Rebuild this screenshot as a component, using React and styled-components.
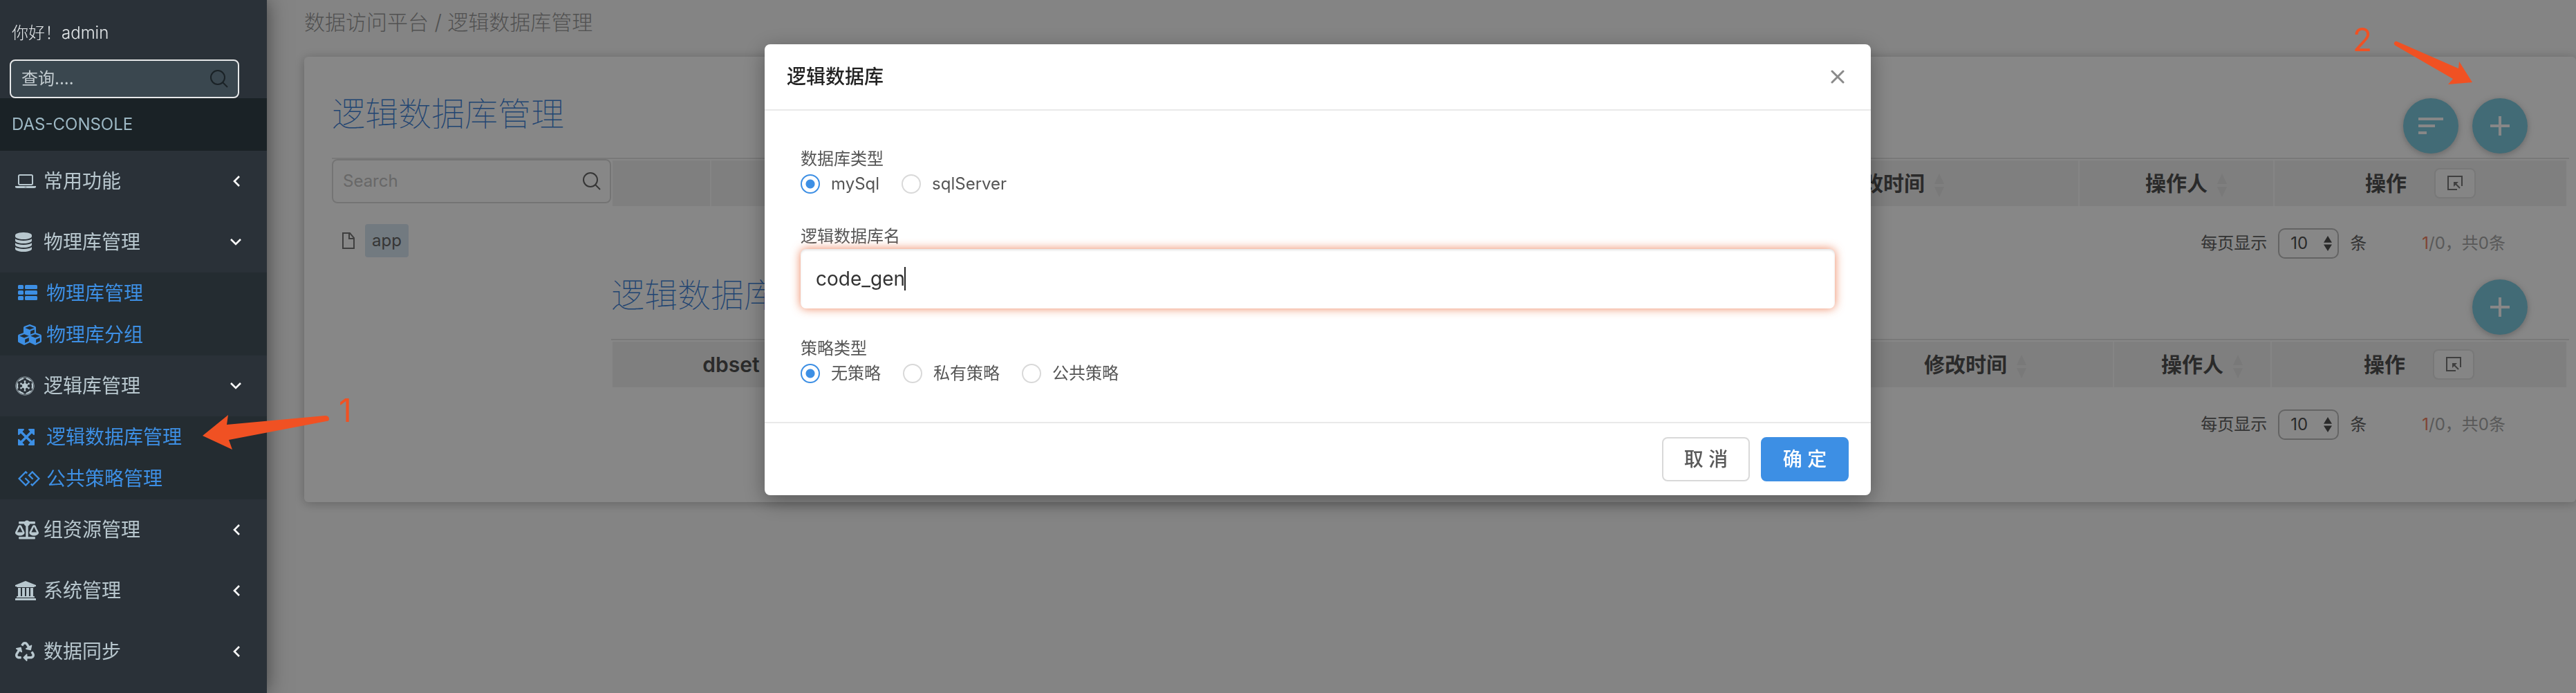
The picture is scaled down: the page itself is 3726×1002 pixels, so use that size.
import React, { useState } from 'react';
import styled, { createGlobalStyle, css } from 'styled-components';
import { FaCubes, FaEmpire, FaGg, FaBalanceScale, FaRecycle } from 'react-icons/fa';

const GlobalStyle = createGlobalStyle`
  *, *::before, *::after { box-sizing: border-box; }
  body {
    margin: 0;
    background: #fafafa;
    font-family: Inter, "Noto Sans CJK SC", sans-serif;
    font-size: 24px;
    line-height: 36px;
    color: #555;
  }
  button, input, select { font: inherit; color: inherit; margin: 0; }
  h1, h2, p, ul { margin: 0; padding: 0; font-weight: inherit; }
  ul { list-style: none; }
  a { text-decoration: none; color: inherit; }
`;

/* ---------- icons ---------- */

const Glyph = ({ box, w, h, children }) => (
  <svg viewBox={box} width={w} height={h} fill="currentColor" aria-hidden="true">{children}</svg>
);
const LaptopIcon = () => (
  <Glyph box="0 0 1920 1792" w={30} h={28}>
    <path d="M416 1280q-66 0-113-47t-47-113v-704q0-66 47-113t113-47h1088q66 0 113 47t47 113v704q0 66-47 113t-113 47h-1088zm-32-864v704q0 13 9.500 22.500t22.500 9.500h1088q13 0 22.500-9.500t9.500-22.500v-704q0-13-9.500-22.500t-22.500-9.500h-1088q-13 0-22.500 9.500t-9.500 22.500zm1376 928h160v96q0 40-47 68t-113 28h-1600q-66 0-113-28t-47-68v-96h1760zm-720 96q16 0 16-16t-16-16h-160q-16 0-16 16t16 16h160z" />
  </Glyph>
);
const DatabaseIcon = () => (
  <Glyph box="128 0 1536 1792" w={24} h={28}>
    <path d="M896 768q237 0 443-43t325-127v170q0 69-103 128t-280 93.500-385 34.500-385-34.500-280-93.500-103-128v-170q119 84 325 127t443 43zm0 768q237 0 443-43t325-127v170q0 69-103 128t-280 93.500-385 34.500-385-34.500-280-93.500-103-128v-170q119 84 325 127t443 43zm0-384q237 0 443-43t325-127v170q0 69-103 128t-280 93.500-385 34.500-385-34.500-280-93.500-103-128v-170q119 84 325 127t443 43zm0-1152q208 0 385 34.500t280 93.500 103 128v128q0 69-103 128t-280 93.500-385 34.500-385-34.500-280-93.500-103-128v-128q0-69 103-128t280-93.500 385-34.500z" />
  </Glyph>
);
const ListIcon = () => (
  <Glyph box="0 0 1792 1536" w={28} h={24}>
    {[0, 512, 1024].map((y) => (
      <g key={y}>
        <rect x="0" y={y} width="512" height="384" rx="96" />
        <rect x="640" y={y} width="1152" height="384" rx="96" />
      </g>
    ))}
  </Glyph>
);
const ArrowsIcon = () => (
  <Glyph box="0 0 1536 1536" w={24} h={24}>
    <path d="M1283 413l-355 355 355 355 144-144q29-31 70-14 39 17 39 59v448q0 26-19 45t-45 19h-448q-42 0-59-40-17-39 14-69l144-144-355-355-355 355 144 144q31 30 14 69-17 40-59 40h-448q-26 0-45-19t-19-45v-448q0-42 40-59 39-17 69 14l144 144 355-355-355-355-144 144q-19 19-45 19-12 0-24-5-40-17-40-59v-448q0-26 19-45t45-19h448q42 0 59 40 17 39-14 69l-144 144 355 355 355-355-144-144q-31-30-14-69 17-40 59-40h448q26 0 45 19t19 45v448q0 42-39 59-13 5-25 5-26 0-45-19z" />
  </Glyph>
);
const BankIcon = () => (
  <Glyph box="0 0 1920 1792" w={30} h={28}>
    <path d="M960 0l960 384v128h-128q0 26-20.500 45t-48.500 19h-1526q-28 0-48.500-19t-20.500-45h-128v-128zm-704 640h256v768h128v-768h256v768h128v-768h256v768h128v-768h256v768h59q28 0 48.500 19t20.500 45v64h-1664v-64q0-26 20.500-45t48.500-19h59v-768zm1595 960q28 0 48.500 19t20.500 45v128h-1920v-128q0-26 20.500-45t48.500-19h1782z" />
  </Glyph>
);
const SearchIcon = () => (
  <svg viewBox="0 0 26 26" width="26" height="26" fill="none" stroke="currentColor" strokeWidth="2" aria-hidden="true">
    <circle cx="11" cy="11" r="10" />
    <path d="M18 18l7 7" />
  </svg>
);
const Chevron = ({ open }) => (
  <svg viewBox="0 0 18 18" width="18" height="18" fill="none" stroke="#fff" strokeWidth="2.600" aria-hidden="true">
    <path d={open ? 'M2 5l7 7 7-7' : 'M14 2L7 9l7 7'} />
  </svg>
);
const FileIcon = () => (
  <svg viewBox="0 0 18 24" width="18" height="24" fill="none" stroke="currentColor" strokeWidth="2" aria-hidden="true">
    <path d="M1 1h10l6 7v15H1zM10 1v8h7" />
  </svg>
);
const PlusIcon = () => (
  <svg viewBox="0 0 28 28" width="28" height="28" fill="currentColor" aria-hidden="true">
    <path d="M12 0h4v12h12v4H16v12h-4V16H0v-4h12z" />
  </svg>
);
const FilterIcon = () => (
  <svg viewBox="0 0 36 24" width="36" height="24" fill="currentColor" aria-hidden="true">
    <path d="M0 0h36v4H0zM0 10h24v4H0zM0 20h12v4H0z" />
  </svg>
);
const SelectBoxIcon = () => (
  <svg viewBox="0 0 22 22" width="22" height="22" fill="none" stroke="currentColor" strokeWidth="2" aria-hidden="true">
    <path d="M14 20H1V1h20v14" />
    <path d="M10 10l8 8" />
    <path d="M9 9h7l-7 7z" fill="currentColor" stroke="none" />
  </svg>
);
const CloseIcon = () => (
  <svg viewBox="0 0 20 20" width="20" height="20" fill="none" stroke="currentColor" strokeWidth="3" strokeLinecap="round" aria-hidden="true">
    <path d="M2 2l16 16M18 2L2 18" />
  </svg>
);
const Updown = ({ w, h }) => (
  <svg viewBox="0 0 14 32" width={w} height={h} preserveAspectRatio="none" fill="currentColor" aria-hidden="true">
    <path d="M7 0l7 14H0zM7 32l7-14H0z" />
  </svg>
);

/* ---------- sidebar ---------- */

const Shell = styled.div`
  display: flex;
  min-height: 100vh;
  overflow: hidden;
`;
const Sidebar = styled.aside`
  position: relative;
  z-index: 3;
  flex: none;
  width: 386px;
  background: #2a3138;
  color: #b8c7ce;
  box-shadow: 0 0 28px rgba(0, 0, 0, 0.5);
`;
const Greeting = styled.p`
  padding: 30px 17px 20px;
  font-weight: 300;
  color: #e4e8ea;
`;
const SideSearch = styled.label`
  display: flex;
  align-items: center;
  height: 56px;
  margin: 0 40px 0 14px;
  padding: 0 14px 0 15px;
  border: 2px solid #e6e8e9;
  border-radius: 8px;
  background: #3a474f;
  color: #1a2226;
`;
const BareInput = styled.input`
  flex: 1;
  min-width: 0;
  padding: 0;
  border: 0;
  outline: 0;
  background: transparent;
  &::placeholder { color: ${(p) => p.$hint}; opacity: 1; }
`;
const Brand = styled.div`
  padding: 20px 17px;
  background: #1a2226;
  color: #9db8c4;
`;
const MenuRow = styled.button`
  display: flex;
  align-items: center;
  width: 100%;
  height: 88px;
  padding: 0 36px 0 22px;
  border: 0;
  background: transparent;
  font-size: 28px;
  text-align: left;
`;
const IconSlot = styled.span`
  display: flex;
  flex: 0 0 41px;
`;
const MenuText = styled.span`
  flex: 1;
`;
const SubMenu = styled.ul`
  background: #242c31;
`;
const SubLink = styled.a`
  display: flex;
  align-items: center;
  height: 60px;
  padding-left: 26px;
  font-size: 28px;
  color: #3d8fe4;
`;

const menu = [
  { text: '常用功能', icon: <LaptopIcon /> },
  {
    text: '物理库管理',
    icon: <DatabaseIcon />,
    items: [
      { text: '物理库管理', icon: <ListIcon /> },
      { text: '物理库分组', icon: <FaCubes size={34} /> },
    ],
  },
  {
    text: '逻辑库管理',
    icon: <FaEmpire size={28} />,
    items: [
      { text: '逻辑数据库管理', icon: <ArrowsIcon /> },
      { text: '公共策略管理', icon: <FaGg size={32} /> },
    ],
  },
  { text: '组资源管理', icon: <FaBalanceScale size={34} /> },
  { text: '系统管理', icon: <BankIcon /> },
  { text: '数据同步', icon: <FaRecycle size={28} /> },
];

/* ---------- page content ---------- */

const Main = styled.main`
  flex: 1;
  min-width: 0;
  padding-left: 54px;
`;
const Crumbs = styled.nav`
  padding: 10px 0 28px;
  font-size: 30px;
  line-height: 44px;
  font-weight: 300;
  color: #999;
`;
const Card = styled.section`
  padding: 47px 10px 73px 40px;
  border-radius: 6px;
  background: #fff;
  box-shadow: 0 2px 16px rgba(0, 0, 0, 0.25);
`;
const TitleBar = styled.header`
  display: flex;
  align-items: flex-end;
  gap: 20px;
  padding: 0 60px 6px 0;
  border-bottom: 2px solid #e4e4e4;
`;
const Title = styled.h2`
  flex: 1;
  padding-bottom: 21px;
  font-size: 48px;
  line-height: 72px;
  font-weight: 100;
  color: #3d82d8;
`;
const RoundButton = styled.button`
  display: flex;
  align-items: center;
  justify-content: center;
  width: 80px;
  height: 80px;
  padding: 0;
  border: 0;
  border-radius: 50%;
  background: #7dcadf;
  color: #fff;
  box-shadow: 0 2px 10px rgba(0, 0, 0, 0.25);
`;
const Columns = styled.div`
  display: grid;
  grid-template-columns: 404px 1fr;
`;
const TreeSearch = styled.label`
  display: flex;
  align-items: center;
  height: 64px;
  padding: 0 13px 0 14px;
  border: 2px solid #dcdcdc;
  border-radius: 8px;
  color: #666;
`;
const TreeNode = styled.div`
  display: flex;
  align-items: center;
  gap: 15px;
  padding: 30px 15px;
  color: #777;
`;
const NodeName = styled.span`
  padding: 6px 10px;
  border-radius: 4px;
  background: #d7e6f1;
  color: #666;
`;
const Grid = styled.div`
  padding: 2px 4px 0 2px;
`;
const Table = styled.table`
  width: 100%;
  table-layout: fixed;
  border-collapse: collapse;
`;
const Th = styled.th`
  width: ${(p) => (p.$w ? `${p.$w}px` : 'auto')};
  height: 66px;
  padding: 0;
  border-right: 2px solid #fcfcfc;
  background: #f0f0f0;
  font-size: 30px;
  font-weight: 600;
  color: #505050;
  &:last-child { border-right: 0; }
`;
const HeadLabel = styled.span`
  position: relative;
`;
const Sorter = styled.span`
  position: absolute;
  left: calc(100% + 14px);
  top: 4px;
  line-height: 0;
  color: #e4e4e4;
`;
const ActionHead = styled.span`
  display: flex;
  align-items: center;
  justify-content: center;
  gap: 40px;
`;
const PickButton = styled.button`
  display: flex;
  align-items: center;
  justify-content: center;
  width: 60px;
  height: 44px;
  padding: 0;
  border: 2px solid #e2e2e2;
  border-radius: 8px;
  background: #fcfcfc;
  color: #777;
`;
const Pager = styled.div`
  display: flex;
  align-items: center;
  justify-content: flex-end;
  gap: 16px;
  padding: 32px 88px 17px 0;
  color: #606060;
`;
const PageSize = styled.label`
  display: flex;
  align-items: center;
  gap: 16px;
`;
const SelectBox = styled.span`
  position: relative;
  display: flex;
  color: #505050;
`;
const Select = styled.select`
  appearance: none;
  width: 88px;
  height: 44px;
  padding: 0 0 0 16px;
  border: 2px solid #bdbdbd;
  border-radius: 10px;
  background: transparent;
`;
const SelectArrows = styled.span`
  position: absolute;
  right: 10px;
  top: 11px;
  line-height: 0;
  pointer-events: none;
`;
const Total = styled.span`
  padding-left: 64px;
  color: #a8a8a8;
`;
const Current = styled.span`
  color: #f08060;
`;

function ListSection({ title, buttons }) {
  return (
    <TitleBar>
      <Title>{title}</Title>
      {buttons}
    </TitleBar>
  );
}

function DataGrid({ heads, pagerId }) {
  return (
    <Grid>
      <Table>
        <thead>
          <tr>
            {heads.map((h, i) => (
              <Th key={i} $w={h.w} scope="col">
                {h.action ? (
                  <ActionHead>
                    {h.text}
                    <PickButton type="button" aria-label="选择列"><SelectBoxIcon /></PickButton>
                  </ActionHead>
                ) : h.text && (
                  <HeadLabel>
                    {h.text}
                    <Sorter><Updown w={14} h={34} /></Sorter>
                  </HeadLabel>
                )}
              </Th>
            ))}
          </tr>
        </thead>
      </Table>
      <Pager>
        <PageSize htmlFor={pagerId}>
          每页显示
          <SelectBox>
            <Select id={pagerId} defaultValue="10">
              <option value="10">10</option>
            </Select>
            <SelectArrows><Updown w={12} h={22} /></SelectArrows>
          </SelectBox>
          条
        </PageSize>
        <Total><Current>1</Current>/0，共0条</Total>
      </Pager>
    </Grid>
  );
}

/* ---------- dialog ---------- */

const Mask = styled.div`
  position: fixed;
  inset: 0;
  z-index: 2;
  display: flex;
  align-items: flex-start;
  justify-content: center;
  padding: 64px 0 0 86px;
  background: rgba(0, 0, 0, 0.47);
`;
const Dialog = styled.div`
  width: 1600px;
  border-radius: 8px;
  background: #fff;
  box-shadow: 0 8px 32px rgba(0, 0, 0, 0.35);
`;
const DialogHead = styled.header`
  display: flex;
  align-items: center;
  justify-content: space-between;
  height: 96px;
  padding: 0 38px 0 32px;
  border-bottom: 2px solid #e9e9e9;
`;
const DialogTitle = styled.h1`
  font-size: 28px;
  font-weight: 500;
  color: #222;
`;
const CloseButton = styled.button`
  display: flex;
  padding: 0;
  border: 0;
  background: transparent;
  color: #8a8a8a;
`;
const DialogBody = styled.form`
  display: flex;
  flex-direction: column;
  gap: 40px;
  padding: 52px 52px 52px;
`;
const Field = styled.fieldset`
  margin: 0;
  padding: 0;
  border: 0;
  min-width: 0;
`;
const fieldLabel = css`
  display: block;
  padding: 0;
  line-height: 36px;
`;
const Legend = styled.legend`${fieldLabel}`;
const TextLabel = styled.label`${fieldLabel}`;
const Radios = styled.div`
  display: flex;
  gap: 32px;
`;
const RadioLabel = styled.label`
  display: flex;
  align-items: center;
  gap: 16px;
`;
const Radio = styled.input`
  appearance: none;
  width: 28px;
  height: 28px;
  border: 2px solid #d9d9d9;
  border-radius: 50%;
  background: #fff;
  &:checked {
    border-color: #3d8fe4;
    background: radial-gradient(circle, #3d8fe4 6px, #fff 7px);
  }
`;
const TextBox = styled.div`
  position: relative;
`;
const TextInput = styled.input`
  display: block;
  width: 100%;
  height: 86px;
  padding: 0 22px;
  border: 0;
  border-radius: 8px;
  outline: 0;
  font-size: 28px;
  color: #333;
  background: #fff;
  box-shadow: 0 0 14px rgba(232, 92, 40, 0.75), inset 0 2px 3px rgba(0, 0, 0, 0.1);
  caret-color: transparent;
`;
const Caret = styled.span`
  position: absolute;
  left: 150px;
  top: 26px;
  width: 2px;
  height: 34px;
  background: #222;
`;
const DialogFoot = styled.footer`
  display: flex;
  justify-content: flex-end;
  gap: 16px;
  padding: 20px 32px;
  border-top: 2px solid #e9e9e9;
`;
const DialogButton = styled.button`
  width: 127px;
  height: 64px;
  padding: 0;
  border: 2px solid ${(p) => (p.$primary ? '#3d8fe4' : '#d9d9d9')};
  border-radius: 8px;
  background: ${(p) => (p.$primary ? '#3d8fe4' : '#fff')};
  color: ${(p) => (p.$primary ? '#fff' : '#595959')};
  font-size: 28px;
  font-weight: 500;
`;

/* ---------- annotations ---------- */

const Notes = styled.div`
  position: absolute;
  inset: 0;
  z-index: 4;
  overflow: hidden;
  pointer-events: none;
  color: #f05123;
`;
const NoteNumber = styled.span`
  position: absolute;
  left: ${(p) => p.$x}px;
  top: ${(p) => p.$y}px;
  font-size: 46px;
  line-height: 56px;
`;
const Arrow = styled.svg`
  position: absolute;
  left: ${(p) => p.$x}px;
  top: ${(p) => p.$y}px;
  fill: currentColor;
`;

function RadioGroup({ legend, name, options }) {
  const [value, setValue] = useState(options[0]);
  return (
    <Field>
      <Legend>{legend}</Legend>
      <Radios>
        {options.map((o) => (
          <RadioLabel key={o}>
            <Radio type="radio" name={name} value={o} checked={value === o} onChange={() => setValue(o)} />
            {o}
          </RadioLabel>
        ))}
      </Radios>
    </Field>
  );
}

export default function App() {
  const [name, setName] = useState('code_gen');
  return (
    <>
      <GlobalStyle />
      <Shell>
        <Sidebar>
          <Greeting>你好！admin</Greeting>
          <SideSearch>
            <BareInput $hint="#c3ccd0" placeholder="查询...." aria-label="查询" />
            <SearchIcon />
          </SideSearch>
          <Brand>DAS-CONSOLE</Brand>
          <nav>
            {menu.map((m) => (
              <div key={m.text}>
                <MenuRow type="button" aria-expanded={!!m.items}>
                  <IconSlot>{m.icon}</IconSlot>
                  <MenuText>{m.text}</MenuText>
                  <Chevron open={!!m.items} />
                </MenuRow>
                {m.items && (
                  <SubMenu>
                    {m.items.map((s) => (
                      <li key={s.text}>
                        <SubLink href="#"><IconSlot>{s.icon}</IconSlot>{s.text}</SubLink>
                      </li>
                    ))}
                  </SubMenu>
                )}
              </div>
            ))}
          </nav>
        </Sidebar>

        <Main>
          <Crumbs>数据访问平台 / 逻辑数据库管理</Crumbs>
          <Card>
            <ListSection
              title="逻辑数据库管理"
              buttons={(
                <>
                  <RoundButton type="button" aria-label="筛选"><FilterIcon /></RoundButton>
                  <RoundButton type="button" aria-label="添加"><PlusIcon /></RoundButton>
                </>
              )}
            />
            <Columns>
              <div>
                <TreeSearch>
                  <BareInput $hint="#c4c4c4" placeholder="Search" aria-label="Search" />
                  <SearchIcon />
                </TreeSearch>
                <TreeNode><FileIcon /><NodeName>app</NodeName></TreeNode>
              </div>
              <div>
                <DataGrid
                  pagerId="size-db"
                  heads={[
                    { w: 142 }, {},
                    { text: '修改时间', w: 566 },
                    { text: '操作人', w: 282 },
                    { text: '操作', w: 423, action: true },
                  ]}
                />
                <ListSection
                  title="逻辑数据库管理"
                  buttons={<RoundButton type="button" aria-label="添加"><PlusIcon /></RoundButton>}
                />
                <DataGrid
                  pagerId="size-map"
                  heads={[
                    { text: 'dbset', w: 344 }, {},
                    { text: '修改时间', w: 428 },
                    { text: '操作人', w: 228 },
                    { text: '操作', w: 427, action: true },
                  ]}
                />
              </div>
            </Columns>
          </Card>
        </Main>
      </Shell>

      <Mask>
        <Dialog role="dialog" aria-labelledby="dialog-title">
          <DialogHead>
            <DialogTitle id="dialog-title">逻辑数据库</DialogTitle>
            <CloseButton type="button" aria-label="关闭"><CloseIcon /></CloseButton>
          </DialogHead>
          <DialogBody>
            <RadioGroup legend="数据库类型" name="dbType" options={['mySql', 'sqlServer']} />
            <div>
              <TextLabel htmlFor="db-name">逻辑数据库名</TextLabel>
              <TextBox>
                <TextInput id="db-name" value={name} onChange={(e) => setName(e.target.value)} />
                <Caret />
              </TextBox>
            </div>
            <RadioGroup legend="策略类型" name="strategy" options={['无策略', '私有策略', '公共策略']} />
          </DialogBody>
          <DialogFoot>
            <DialogButton type="button">取 消</DialogButton>
            <DialogButton type="button" $primary>确 定</DialogButton>
          </DialogFoot>
        </Dialog>
      </Mask>

      <Notes>
        <NoteNumber $x={490} $y={565}>1</NoteNumber>
        <Arrow $x={293} $y={600} width="184" height="50" viewBox="0 0 184 50">
          <path d="M0 30L37 0 35 14 177 1Q183 1 183 6 183 9 179 9L38 36 43 50z" />
        </Arrow>
        <NoteNumber $x={3403} $y={29}>2</NoteNumber>
        <Arrow $x={3462} $y={59} width="114" height="64" viewBox="0 0 114 64">
          <path d="M5 1L94 40 95 30 114 60 79 63 86 55 3 7Q0 5 1 3 2 0 5 1z" />
        </Arrow>
      </Notes>
    </>
  );
}
